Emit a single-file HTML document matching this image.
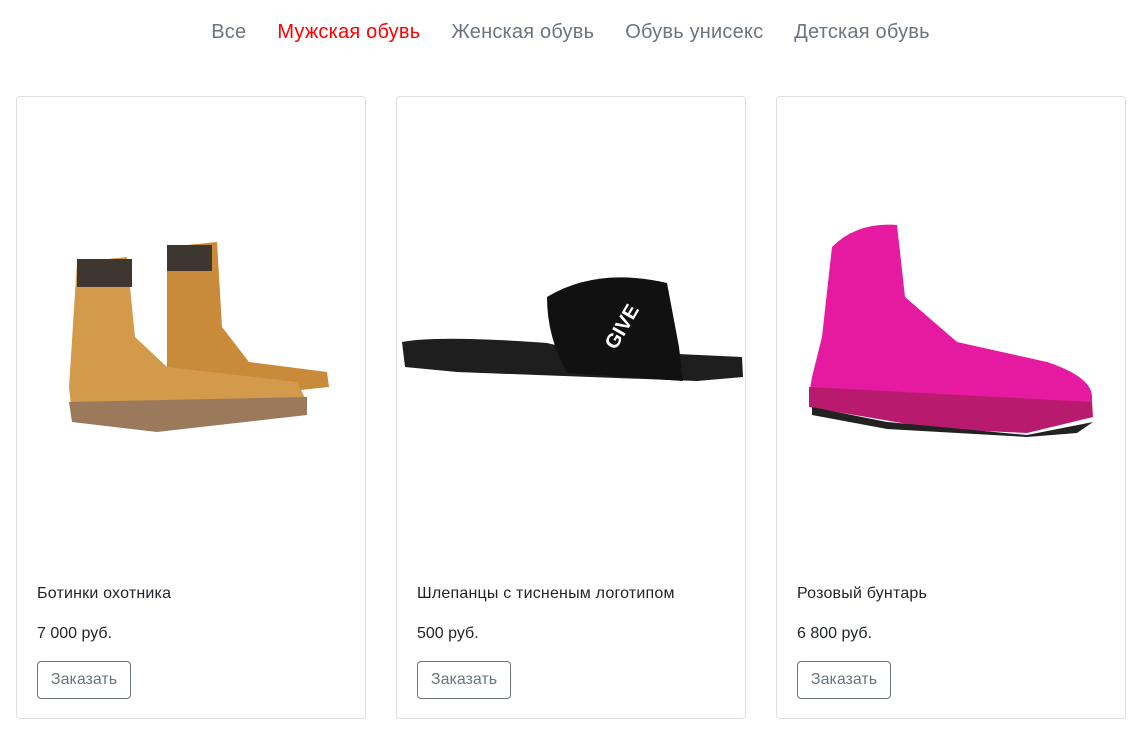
<!DOCTYPE html>
<html><head><meta charset="utf-8"><style>
*{box-sizing:border-box;margin:0;padding:0}
body{width:1141px;height:735px;background:#fff;font-family:"Liberation Sans",Arial,sans-serif;position:relative;overflow:hidden}
.nav{position:absolute;top:21px;left:0;width:1141px;text-align:center;font-size:20px;color:#6c757d;word-spacing:0}
.nav span{margin:0 15.5px;letter-spacing:0.2px}
.nav .a{color:#f00}
.card{position:absolute;top:96px;width:350px;height:623px;border:1px solid #dfdfdf;border-radius:4px}
.card svg{position:absolute;left:0;top:0}
.t{position:absolute;left:20px;top:488px;font-size:16px;color:#212529;letter-spacing:0.2px}
.p{position:absolute;left:20px;top:528px;font-size:16px;color:#212529}
.b{position:absolute;left:20px;top:564px;width:94px;height:38px;border:1px solid #6c757d;border-radius:4px;font-size:16px;color:#6c757d;text-align:center;line-height:36px}
</style></head><body>
<div class="nav"><span>Все</span><span class="a">Мужская обувь</span><span>Женская обувь</span><span>Обувь унисекс</span><span>Детская обувь</span></div>

<div class="card" style="left:16px">
<svg width="350" height="400">
<path d="M150 150 L200 145 L205 230 L232 265 L310 275 L312 290 L170 305 L150 290 Z" fill="#c98a3a"/>
<path d="M60 165 L110 160 L118 240 L150 270 L280 285 L290 305 L140 330 L55 318 L52 290 Z" fill="#d39a4c"/>
<path d="M52 305 L290 300 L290 318 L140 335 L55 325 Z" fill="#9a7a5a"/>
<rect x="60" y="162" width="55" height="28" fill="#3e3730"/>
<rect x="150" y="148" width="45" height="26" fill="#3e3730"/>
</svg>
<div class="t">Ботинки охотника</div><div class="p">7 000 руб.</div><div class="b">Заказать</div></div>

<div class="card" style="left:396px">
<svg width="350" height="400">
<path d="M5 245 Q40 238 150 246 L175 252 L345 260 L346 280 L300 284 L60 275 L8 270 Z" fill="#1e1e1e"/>
<path d="M150 200 Q200 170 270 186 L282 250 L286 284 L170 276 Q150 240 150 200 Z" fill="#111"/>
<text x="205" y="250" fill="#fff" font-size="20" font-weight="bold" transform="rotate(-60 215 240)" font-family="Liberation Sans">GIVE</text>
</svg>
<div class="t">Шлепанцы с тисненым логотипом</div><div class="p">500 руб.</div><div class="b">Заказать</div></div>

<div class="card" style="left:776px">
<svg width="350" height="400">
<path d="M55 150 Q80 125 120 128 L128 200 L180 245 L270 265 Q315 280 315 300 L315 318 L160 325 L70 312 L32 298 L35 280 L45 240 Z" fill="#e61aa0"/>
<path d="M32 290 L315 305 L316 320 L250 336 L160 332 L60 315 L32 310 Z" fill="#b81a6e"/>
<path d="M35 310 L110 325 L250 338 L316 325 L300 336 L250 340 L110 332 L35 318 Z" fill="#222"/>
</svg>
<div class="t">Розовый бунтарь</div><div class="p">6 800 руб.</div><div class="b">Заказать</div></div>
</body></html>
